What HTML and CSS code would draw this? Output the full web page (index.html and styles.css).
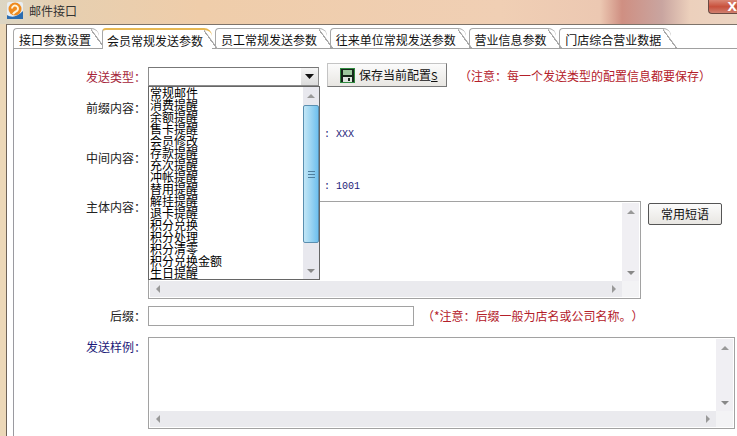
FILE: index.html
```html
<!DOCTYPE html>
<html lang="zh">
<head>
<meta charset="utf-8">
<title>邮件接口</title>
<link rel="stylesheet" href="styles.css">
</head>
<body>
<div class="window">
  <header class="titlebar">
    <svg class="appicon" width="16" height="17" viewBox="0 0 16 17"><rect width="16" height="17" rx="2" fill="#e8eef2"/><circle cx="8" cy="7" r="6.500" fill="#ef8a1e"/><path d="M5 6.500a3 3 0 1 1 5 2.300c-1.500 1-3 1.500-4 3.500" fill="none" stroke="#fff3d8" stroke-width="2"/><path d="M0 13c5 3 10 2 16-4v8H0z" fill="#2b6cb0"/></svg>
    <span class="title">邮件接口</span>
    <span class="close">x</span>
  </header>
  <div class="frame">
    <nav class="tabs">
      <span class="tab first">接口参数设置</span>
      <span class="tab active">会员常规发送参数</span>
      <span class="tab">员工常规发送参数</span>
      <span class="tab">往来单位常规发送参数</span>
      <span class="tab">营业信息参数</span>
      <span class="tab">门店综合营业数据</span>
    </nav>
    <main class="panel">
      <div class="row row-type">
        <label class="label red">发送类型：</label>
        <div class="combo"><span class="combo-arrow"><svg width="9" height="5" viewBox="0 0 9 5"><path d="M0 0h9L4.500 5z" fill="#111"/></svg></span></div>
        <button class="btn save">
          <svg width="15" height="15" viewBox="0 0 15 15"><rect x="0.500" y="0.500" width="14" height="14" fill="#16261a" stroke="#2f8a3f"/><rect x="3" y="2" width="9" height="5" fill="#9cc79c"/><rect x="3" y="9" width="9" height="5" fill="#dfe5df"/><rect x="8" y="10" width="2" height="3" fill="#16261a"/></svg>
          <span>保存当前配置<u>S</u></span>
        </button>
        <span class="note first-note">（注意：每一个发送类型的配置信息都要保存）</span>
      </div>
      <div class="row row-prefix">
        <label class="label">前缀内容：</label>
        <span class="hint">: XXX</span>
      </div>
      <div class="row row-middle">
        <label class="label">中间内容：</label>
        <span class="hint">: 1001</span>
      </div>
      <div class="row row-main">
        <label class="label">主体内容：</label>
        <div class="memo memo-main">
          <div class="memo-body">
            <div class="memo-text"></div>
            <div class="sb-v"><i class="up"></i><i class="down"></i></div>
          </div>
          <div class="sb-h"><i class="left"></i><i class="right"></i></div>
        </div>
        <button class="btn phrases">常用短语</button>
      </div>
      <div class="row row-suffix">
        <label class="label">后缀：</label>
        <div class="input"></div>
        <span class="note">（*注意：后缀一般为店名或公司名称。）</span>
      </div>
      <div class="row row-sample">
        <label class="label navy">发送样例：</label>
        <div class="memo memo-sample">
          <div class="memo-body">
            <div class="memo-text"></div>
            <div class="sb-v"><i class="up"></i><i class="down"></i></div>
          </div>
          <div class="sb-h"><i class="left"></i><i class="right"></i></div>
        </div>
      </div>
      <div class="dropdown">
        <ul class="list">
          <li>常规邮件</li><li>消费提醒</li><li>余额提醒</li><li>售卡提醒</li>
          <li>会员修改</li><li>存款提醒</li><li>充次提醒</li><li>冲帐提醒</li>
          <li>替用提醒</li><li>解挂提醒</li><li>退卡提醒</li><li>积分兑换</li>
          <li>积分处理</li><li>积分清零</li><li>积分兑换金额</li><li>生日提醒</li>
        </ul>
        <div class="dd-sb">
          <i class="up"></i>
          <div class="thumb"><b></b></div>
          <i class="down"></i>
        </div>
      </div>
    </main>
  </div>
</div>
</body>
</html>
```
FILE: styles.css
```css
* { box-sizing: border-box; }
html, body { margin: 0; height: 100%; }
body {
  width: 737px;
  height: 436px;
  overflow: hidden;
  font: 12px/14px "Noto Sans CJK SC", "Liberation Sans", sans-serif;
  text-spacing-trim: space-all;
  color: #222;
  background: #fff;
}
.window {
  display: flex;
  flex-direction: column;
  height: 436px;
  background: #ecd8b8;
}
.titlebar {
  display: flex;
  align-items: center;
  gap: 6px;
  height: 24px;
  padding: 0 0 0 7px;
  flex: none;
  position: relative;
  background: linear-gradient(90deg, #dcd6c4 0, #e6cfb0 60px, #efcdaa 200px, #f0cfb4 500px, #ecc8b2 600px, #cf8f82 622px, #c9a5a0 662px, #ecd0bc 690px, #ecd4c2 100%);
}
.appicon { flex: none; margin-top: -3px; }
.title { font-size: 12px; color: #333; margin-top: -3px; }
.close {
  position: absolute;
  right: 0;
  top: -6px;
  width: 29px;
  height: 20px;
  border: 1px solid #6a4a42;
  border-right: 0;
  border-radius: 0 0 0 4px;
  background: linear-gradient(180deg, #e8b0a0, #c8503c 65%, #d08070);
  color: #fff;
  font: bold 17px/22px "Liberation Sans", sans-serif;
  text-align: right;
  overflow: hidden;
}
.frame {
  flex: 1;
  margin-left: 6px;
  display: flex;
  flex-direction: column;
  background: #fff;
  border-top: 1px solid #7d736a;
  border-left: 1px solid #6d6257;
  min-height: 0;
}
.tabs {
  display: flex;
  align-items: flex-end;
  height: 23px;
  flex: none;
  padding: 3px 0 0 6px;
  background: #fff;
}
.tab {
  position: relative;
  height: 20px;
  line-height: 21px;
  padding: 0 9.750px 0 5px;
  margin-right: 3px;
  white-space: nowrap;
  color: #111;
  border-top: 1px solid #a8a8a8;
  border-left: 1px solid #a8a8a8;
  border-radius: 4px 8px 0 0;
}
.tab::after {
  content: "";
  position: absolute;
  right: -6px;
  top: 0;
  width: 14px;
  height: 19px;
  background: linear-gradient(to top right, transparent calc(50% - 1px), #a8a8a8 calc(50% - 1px), #a8a8a8 50%, transparent calc(50% + 0.500px));
}
.tab.first { padding-left: 5px; width: 86px; }
.tab.active {
  height: 21px;
  margin-bottom: -1px;
  border-top: 2px solid #e6b752;
  width: 110px;
  padding-left: 4px;
  z-index: 1;
  background: #fff;
}
.panel {
  flex: 1;
  position: relative;
  margin-left: 6px;
  padding-left: 134px;
  background: #fff;
  border-top: 1px solid #a0a0a0;
  border-left: 1px solid #9a9aa0;
  min-height: 0;
}
.row { display: flex; position: relative; }
.label {
  position: absolute;
  right: calc(100% + 2px);
  width: 100px;
  text-align: right;
  white-space: nowrap;
  color: #222;
  font-size: 12px;
  line-height: 14px;
}
.label.red { color: #a5243a; }
.label.navy { color: #1c1a78; }
.row-type { margin-top: 18px; height: 19px; align-items: flex-start; }
.row-type .label { top: 3px; }
.combo {
  width: 171px;
  height: 19px;
  border: 1px solid #8d8d8d;
  border-top-color: #777;
  background: #fff;
  position: relative;
}
.combo-arrow {
  position: absolute;
  right: 0;
  top: 0;
  width: 17px;
  height: 17px;
  background: linear-gradient(#f5f5f5, #dcdcdc);
  display: flex;
  align-items: center;
  justify-content: center;
}
.btn {
  font: 12px/14px "Noto Sans CJK SC", sans-serif;
  color: #111;
  padding: 0;
  background: linear-gradient(#fbfbfb, #e8e6e2);
}
.save {
  width: 120px;
  height: 24px;
  margin: -4px 0 0 8px;
  border: 1px solid #c4c4c4;
  border-right-color: #777;
  border-bottom-color: #777;
  display: flex;
  align-items: center;
  gap: 4px;
  padding-left: 12px;
  white-space: nowrap;
}
.save u { text-decoration: underline; font-size: 11px; }
.note { color: #b4202a; white-space: nowrap; font-size: 12px; }
.first-note { margin: 0 0 0 12px; line-height: 17px; }
.row-prefix { margin-top: 15px; height: 20px; }
.row-prefix .label { top: 0; }
.row-middle { margin-top: 30px; height: 20px; }
.row-middle .label { top: 0; }
.hint {
  position: absolute;
  left: 176px;
  font: 10px/12px "Liberation Mono", monospace;
  color: #1c1a78;
  white-space: pre;
}
.row-prefix .hint { top: 28px; }
.row-middle .hint { top: 30px; }
.row-main { margin-top: 30px; height: 98px; }
.row-main .label { top: -1px; }
.memo {
  border: 1px solid #a2a2a2;
  background: #fff;
  display: flex;
  flex-direction: column;
  padding: 1px;
}
.memo-main { width: 493px; height: 98px; }
.memo-sample { width: 587px; height: 92px; }
.memo-body { flex: 1; display: flex; min-height: 0; }
.memo-text { flex: 1; }
.sb-v {
  width: 17px;
  flex: none;
  background: #f0eff3;
  display: flex;
  flex-direction: column;
  justify-content: space-between;
  padding: 7px 0 6px;
  align-items: center;
}
.sb-h {
  height: 16px;
  flex: none;
  background: #eaeaee;
  margin-right: 17px;
  display: flex;
  justify-content: space-between;
  align-items: center;
  padding: 0 6px;
  box-shadow: 17px 0 0 #f3f3f5;
}
.up, .down, .left, .right { display: block; width: 0; height: 0; }
.up { border: 4px solid transparent; border-top: 0; border-bottom: 4px solid #999; }
.down { border: 4px solid transparent; border-bottom: 0; border-top: 4px solid #888; }
.left { border: 4px solid transparent; border-left: 0; border-right: 4px solid #999; }
.right { border: 4px solid transparent; border-right: 0; border-left: 4px solid #999; }
.phrases {
  width: 74px;
  height: 22px;
  margin: 2px 0 0 7px;
  border: 1px solid #555;
  border-radius: 2px;
  font-size: 12px;
}
.row-suffix { margin-top: 7px; height: 20px; align-items: center; }
.row-suffix .label { top: 3px; }
.input {
  width: 266px;
  height: 20px;
  border: 1px solid #a2a2a2;
  background: #fff;
}
.row-suffix .note { margin-left: 8px; }
.row-sample { margin-top: 11px; }
.row-sample .label { top: 3px; }
.dropdown {
  position: absolute;
  left: 134px;
  top: 37px;
  width: 172px;
  height: 194px;
  border: 1px solid #666;
  background: #fff;
  display: flex;
  z-index: 5;
}
.list {
  flex: 1;
  list-style: none;
  margin: 0;
  padding: 0 0 0 1px;
  overflow: hidden;
}
.list li { height: 12px; line-height: 12px; color: #000; white-space: nowrap; font-size: 12px; }
.dd-sb {
  width: 16px;
  flex: none;
  background: #e8e8ee;
  display: flex;
  flex-direction: column;
  align-items: center;
  position: relative;
  padding-top: 7px;
}
.dd-sb .down { position: absolute; bottom: 6px; left: 4px; }
.thumb {
  position: absolute;
  top: 18px;
  left: 0;
  width: 16px;
  height: 138px;
  border: 1px solid #5a8fb0;
  border-radius: 2px;
  background: linear-gradient(90deg, #c3e6f6, #9fd6f2 45%, #6fc0ee);
  display: flex;
  align-items: center;
  justify-content: center;
}
.thumb b {
  display: block;
  width: 7px;
  height: 7px;
  background: repeating-linear-gradient(#4f7f9f 0 1px, transparent 1px 3px);
}
```
